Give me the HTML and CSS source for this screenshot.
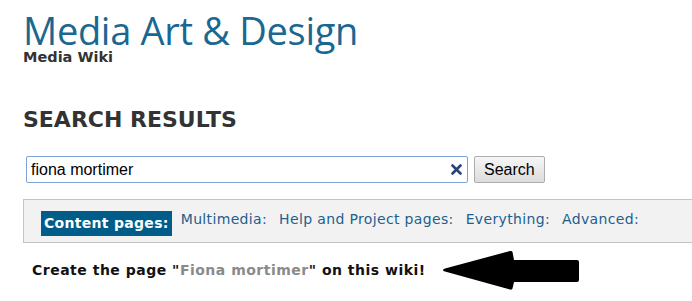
FILE: index.html
```html
<!DOCTYPE html>
<html lang="en">
<head>
    <meta charset="UTF-8">
    <title>Search results - Media Wiki</title>
    <link rel="stylesheet" href="styles.css">
</head>
<body>
    <div class="header">
        <div class="site-title">Media Art &amp; Design</div>
        <div class="site-sub">Media Wiki</div>
    </div>

    <h1 class="page-title">SEARCH RESULTS</h1>

    <form class="search-form">
        <div class="search-box">
            <input type="text" value="fiona mortimer">
            <svg class="clear" width="11" height="11" viewBox="0 0 11 11">
                <path d="M1.5 1.5 L9.5 9.5 M9.5 1.5 L1.5 9.5" stroke="#26467a" stroke-width="2.6" stroke-linecap="round"/>
            </svg>
        </div>
        <button type="button" class="search-btn">Search</button>
    </form>

    <div class="profiles">
        <span class="profile current">Content pages:</span>
        <a class="profile" href="#">Multimedia:</a>
        <a class="profile" href="#">Help and Project pages:</a>
        <a class="profile" href="#">Everything:</a>
        <a class="profile" href="#">Advanced:</a>
    </div>

    <div class="create">
        <span class="create-text">Create the page "<a href="#">Fiona mortimer</a>" on this wiki!</span>
        <svg class="arrow" width="140" height="42" viewBox="0 0 140 42">
            <path d="M2 21 Q2 20 4 19.5 L69 2 Q71 1.6 71.5 3 L73 11 L136 11 Q138 11 138 13 L138 31 Q138 33 136 33 L73 33 L71.5 39.5 Q71 41 69 40.5 L4 22.5 Q2 22 2 21 Z" fill="#000"/>
        </svg>
    </div>
</body>
</html>
```

FILE: styles.css
```css
body{
    margin: 0;
    padding: 0 0 0 23px;
    background: #fff;
    overflow: hidden;
}
.header{
    padding-top: 11px;
}
.site-title{
    font-family: "Open Sans", sans-serif;
    font-size: 38px;
    line-height: 38px;
    color: #1a6891;
    letter-spacing: -0.3px;
}
.site-sub{
    margin-top: 2px;
    font-family: "DejaVu Sans", sans-serif;
    font-weight: bold;
    font-size: 14.5px;
    line-height: 13px;
    color: #333;
}
.page-title{
    margin: 43px 0 0 0;
    font-family: "DejaVu Sans", sans-serif;
    font-weight: bold;
    font-size: 22px;
    line-height: 26px;
    color: #333;
}
.search-form{
    display: flex;
    align-items: center;
    gap: 6px;
    margin: 23px 0 0 0;
    padding: 0 0 16px 3px;
    border-bottom: 1px solid #c4c4c4;
}
.search-box{
    display: flex;
    align-items: center;
    width: 442px;
    height: 27px;
    box-sizing: border-box;
    border: 1px solid #7ea2d4;
    border-radius: 2px;
    background: #fff;
}
.search-box input{
    flex: 1;
    border: 0;
    outline: none;
    height: 25px;
    padding: 0 0 0 4px;
    font-family: "Liberation Sans", Arial, sans-serif;
    font-size: 16px;
    color: #000;
    background: transparent;
}
.clear{
    margin: 0 5px 0 6px;
}
.search-btn{
    height: 27px;
    padding: 0 9px;
    border: 1px solid #acacac;
    border-radius: 2px;
    background: linear-gradient(#f6f6f6, #dcdcdc);
    font-family: "Liberation Sans", Arial, sans-serif;
    font-size: 16px;
    color: #000;
}
.profiles{
    display: flex;
    align-items: flex-start;
    gap: 12px;
    height: 31px;
    padding: 11px 0 0 17px;
    background: #f2f2f2;
    border-left: 1px solid #c4c4c4;
    border-bottom: 1px solid #c4c4c4;
    font-family: "DejaVu Sans", sans-serif;
    font-size: 14px;
    line-height: 17px;
    letter-spacing: 0.35px;
}
.profile{
    color: #235f8d;
    text-decoration: none;
}
.current{
    margin-right: -3px;
    padding: 4px 3px;
    background: #005d89;
    color: #fff;
    font-weight: bold;
    letter-spacing: 0.3px;
}
.create{
    display: flex;
    align-items: center;
    margin: 6px 0 0 9px;
}
.create-text{
    font-family: "DejaVu Sans", sans-serif;
    font-weight: bold;
    font-size: 14px;
    line-height: 17px;
    letter-spacing: 0.5px;
    color: #111;
}
.create-text a{
    color: #8a8a8a;
    text-decoration: none;
}
.arrow{
    margin-left: 15px;
}
```
